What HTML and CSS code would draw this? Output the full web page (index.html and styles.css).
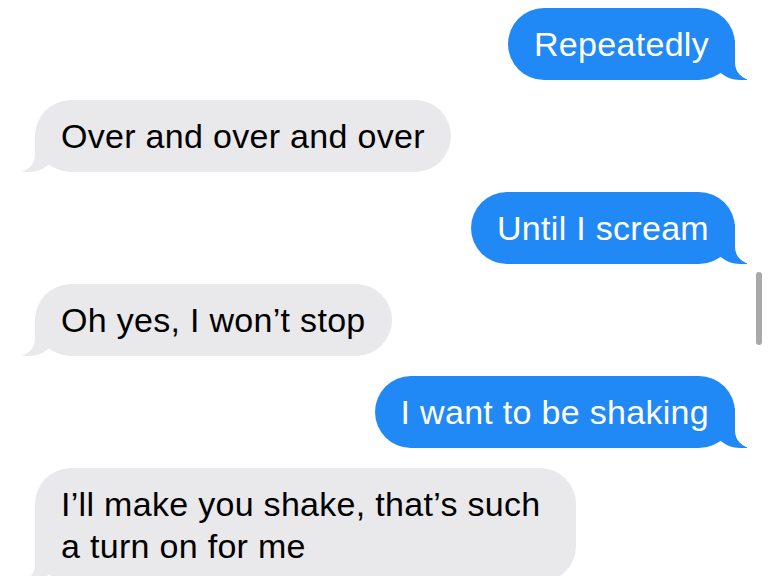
FILE: index.html
```html
<!DOCTYPE html>
<html lang="en">
<head>
  <meta charset="UTF-8" />
  <meta name="viewport" content="width=device-width, initial-scale=1" />
  <title>Messages</title>
  <link rel="stylesheet" href="styles.css">
</head>
<body>

  <div class="thread">
    <div class="bubble sent">Repeatedly</div>
    <div class="bubble received">Over and over and over</div>
    <div class="bubble sent">Until I scream</div>
    <div class="bubble received">Oh yes, I won’t stop</div>
    <div class="bubble sent">I want to be shaking</div>
    <div class="bubble received">I’ll make you shake, that’s such a turn on for me</div>
  </div>

  <div class="scroll-indicator"></div>

</body>
</html>
```

FILE: styles.css
```css
body {
  margin: 0;
  background: #fff;
  font-family: "Liberation Sans", Arial, sans-serif;
  overflow: hidden;
  height: 576px;
  position: relative;
}
.thread {
  display: flex;
  flex-direction: column;
  gap: 20px;
  padding: 8px 33px 0 35px;
}
.bubble {
  position: relative;
  max-width: 541px;
  box-sizing: border-box;
  padding: 15px 26px;
  border-radius: 36px;
  font-size: 34px;
  line-height: 42px;
  letter-spacing: 0.3px;
}
.bubble::before,
.bubble::after {
  content: "";
  position: absolute;
  bottom: 0;
  height: 40px;
}
.sent {
  align-self: flex-end;
  background: #2089f6;
  color: #fff;
}
.sent::before {
  right: -12px;
  width: 34px;
  background: #2089f6;
  border-bottom-left-radius: 27px 24px;
}
.sent::after {
  right: -44px;
  width: 44px;
  background: #fff;
  border-bottom-left-radius: 17px;
}
.received {
  align-self: flex-start;
  background: #e9e9eb;
  color: #000;
}
.received::before {
  left: -13px;
  width: 34px;
  background: #e9e9eb;
  border-bottom-right-radius: 27px 24px;
}
.received::after {
  left: -44px;
  width: 44px;
  background: #fff;
  border-bottom-right-radius: 17px;
}
.scroll-indicator {
  position: absolute;
  left: 756px;
  top: 272px;
  width: 6px;
  height: 73px;
  border-radius: 3px;
  background: #a9a9a9;
}
```
